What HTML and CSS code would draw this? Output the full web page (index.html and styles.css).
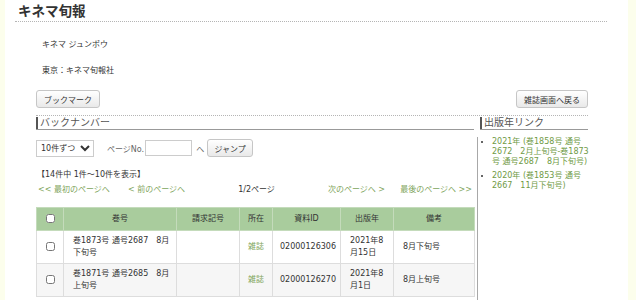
FILE: index.html
```html
<!DOCTYPE html>
<html lang="ja">
<head>
    <meta charset="UTF-8">
    <title>キネマ旬報</title>
    <link rel="stylesheet" href="styles.css">
</head>
<body>

<div class="page">
    <div class="title-bar">
        <h1>キネマ旬報</h1>
    </div>

    <div class="info">
        <p>キネマ ジュンポウ</p>
        <p>東京：キネマ旬報社</p>
    </div>

    <div class="wrap">
        <div class="buttons">
            <button type="button" class="btn">ブックマーク</button>
            <button type="button" class="btn">雑誌画面へ戻る</button>
        </div>

        <!-- section headings -->
        <div class="heads">
            <h2 class="head head-main"><span>バックナンバー</span></h2>
            <h2 class="head head-side"><span>出版年リンク</span></h2>
        </div>

        <div class="columns">
            <div class="main">
                <form class="controls">
                    <select class="per-page">
                        <option>10件ずつ</option>
                        <option>20件ずつ</option>
                        <option>50件ずつ</option>
                    </select>
                    <label for="pageNo" class="page-label">ページNo.</label>
                    <input type="text" id="pageNo" class="page-input">
                    <span class="to">へ</span>
                    <button type="button" class="btn">ジャンプ</button>
                </form>

                <p class="count">【14件中 1件～10件を表示】</p>

                <div class="pager">
                    <a href="#" class="p-left">&lt;&lt; 最初のページへ</a>
                    <a href="#" class="p-left">&lt; 前のページへ</a>
                    <span class="p-mid">1/2ページ</span>
                    <a href="#" class="p-right">次のページへ &gt;</a>
                    <a href="#" class="p-right">最後のページへ &gt;&gt;</a>
                </div>

                <table class="list">
                    <colgroup>
                        <col style="width:27px">
                        <col style="width:113px">
                        <col style="width:63px">
                        <col style="width:33px">
                        <col style="width:68px">
                        <col style="width:53px">
                        <col>
                    </colgroup>
                    <thead>
                        <tr>
                            <th><input type="checkbox"></th>
                            <th>巻号</th>
                            <th>請求記号</th>
                            <th>所在</th>
                            <th>資料ID</th>
                            <th>出版年</th>
                            <th>備考</th>
                        </tr>
                    </thead>
                    <tbody>
                        <tr>
                            <td class="c"><input type="checkbox"></td>
                            <td>巻1873号 通号2687　8月下旬号</td>
                            <td></td>
                            <td class="c"><a href="#">雑誌</a></td>
                            <td>02000126306</td>
                            <td>2021年8月15日</td>
                            <td>8月下旬号</td>
                        </tr>
                        <tr>
                            <td class="c"><input type="checkbox"></td>
                            <td>巻1871号 通号2685　8月上旬号</td>
                            <td></td>
                            <td class="c"><a href="#">雑誌</a></td>
                            <td>02000126270</td>
                            <td>2021年8月1日</td>
                            <td>8月上旬号</td>
                        </tr>
                    </tbody>
                </table>
            </div>

            <div class="side">
                <ul class="years">
                    <li><a href="#">2021年 (巻1858号 通号2672　2月上旬号-巻1873号 通号2687　8月下旬号)</a></li>
                    <li><a href="#">2020年 (巻1853号 通号2667　11月下旬号)</a></li>
                </ul>
            </div>
        </div>
    </div>
</div>

</body>
</html>
```

FILE: styles.css
```css
body {
    margin: 0;
    background-color: #fcfeec;
    font-family: "DejaVu Sans", "Noto Sans CJK JP", sans-serif;
    font-size: 8px;
    color: #333;
}
.page {
    margin-left: 5px;
    width: 623px;
    height: 300px;
    overflow: hidden;
    background-color: #fff;
}
.title-bar {
    margin: 0 21px 0 10px;
    padding: 2px 0 0 3px;
    border-bottom: 1px dotted #b5b5b5;
}
.title-bar h1 {
    margin: 0;
    font-size: 13.5px;
    line-height: 19px;
    font-weight: bold;
    color: #333;
}
.info {
    padding: 17px 0 0 37px;
}
.info p {
    margin: 0 0 14px;
    line-height: 12px;
}
.wrap {
    margin: 0 40px 0 31px;
}
.buttons {
    display: flex;
    justify-content: space-between;
    margin-top: -1px;
}
.btn {
    height: 18px;
    padding: 0 7px;
    font-family: inherit;
    font-size: 8px;
    color: #333;
    background: linear-gradient(#fff, #e9e9e9);
    border: 1px solid #c6c6c6;
    border-radius: 3px;
}
.heads {
    display: flex;
    margin-top: 7px;
    border-top: 1px dotted #b5b5b5;
}
.head {
    margin: 1px 0 0;
    font-size: 10px;
    font-weight: normal;
    line-height: 12px;
    color: #555;
    border-bottom: 1px solid #999;
}
.head span {
    display: block;
    padding-left: 2px;
    border-left: 2px solid #555;
}
.head-main {
    width: 438px;
}
.head-side {
    flex: 1;
    margin-left: 6px;
}
.columns {
    display: flex;
    margin-top: 7px;
}
.main {
    width: 441px;
}
.side {
    flex: 1;
    border-left: 1px solid #a8a8a8;
    height: 170px;
}
.controls {
    display: flex;
    align-items: center;
    margin: 2px 0 0;
}
.per-page {
    width: 58px;
    height: 17px;
    font-family: inherit;
    font-size: 8px;
    color: #333;
    border: 1px solid #ccc;
    background: #fff;
}
.page-label {
    margin-left: 13px;
    color: #666;
}
.page-input {
    width: 47px;
    height: 16px;
    box-sizing: border-box;
    margin: 0 0 0 1px;
    border: 1px solid #ccc;
}
.to {
    margin: 0 3px 0 4px;
    color: #666;
}
.controls .btn {
    width: 46px;
    padding: 0;
}
.count {
    margin: 12px 0 0 1px;
    line-height: 12px;
}
.pager {
    display: flex;
    width: 438px;
    margin-top: 3px;
    line-height: 12px;
}
.pager > * {
    flex: 1;
    padding: 0 2px;
}
.pager a {
    color: #80a55c;
    text-decoration: none;
}
.p-left + .p-left {
    padding-left: 5px;
}
.p-mid {
    text-align: center;
}
.p-right {
    text-align: right;
}
.list {
    width: 439px;
    margin-top: 11px;
    border-collapse: collapse;
    table-layout: fixed;
}
.list th {
    height: 12px;
    padding: 5px 2px;
    background-color: #a9cc9d;
    border: 1px solid #c4dbbb;
    font-weight: normal;
    line-height: 12px;
    color: #333;
}
.list td {
    padding: 4px 6px 4px 9px;
    border: 1px solid #ddd;
    line-height: 12px;
    height: 24px;
}
.list tbody tr:nth-child(even) td {
    background-color: #f6f6f6;
}
.list td.c {
    padding: 4px 2px;
    text-align: center;
}
.list td:nth-child(5) {
    padding-left: 7px;
}
.list input[type="checkbox"] {
    width: 9px;
    height: 9px;
    margin: 0;
    vertical-align: middle;
}
.list a {
    color: #80a55c;
    text-decoration: none;
}
.years {
    margin: 0 -6px 0 0;
    padding-left: 14px;
    list-style: disc;
}
.years li {
    margin-bottom: 4px;
    line-height: 10px;
}
.years a {
    color: #6f9a45;
    text-decoration: none;
}
```
